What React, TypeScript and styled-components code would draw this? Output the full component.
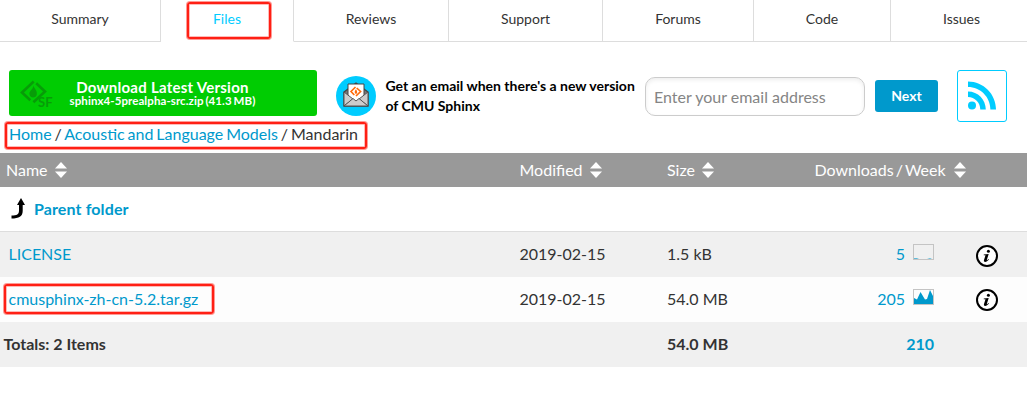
import * as React from 'react';
import styled, { createGlobalStyle } from 'styled-components';

const GlobalStyle = createGlobalStyle`
  * {
    box-sizing: border-box;
  }

  body {
    margin: 0;
    background: #fff;
    color: #333;
    font-family: Lato, 'Open Sans', sans-serif;
    font-size: 16px;
  }
`;

const Page = styled.main`
  width: 1027px;
  height: 415px;
  overflow: hidden;
`;

const TabBar = styled.nav`
  display: flex;
  height: 42px;
`;

const Tab = styled.a<{ $width: number; $active?: boolean; $last?: boolean }>`
  display: flex;
  justify-content: center;
  flex: 0 0 ${(props) => props.$width}px;
  padding: 10px 0 0 ${(props) => (props.$last ? 5 : 0)}px;
  border-right: ${(props) => (props.$last ? 'none' : '1px solid #ddd')};
  border-bottom: 1px solid ${(props) => (props.$active ? 'transparent' : '#ddd')};
  color: ${(props) => (props.$active ? '#0cf' : '#333')};
  font-size: 14px;
  line-height: 18px;
`;

const Marked = styled.span<{ $inset: string }>`
  position: relative;

  &::after {
    content: '';
    position: absolute;
    inset: ${(props) => props.$inset};
    border: 2px solid #ff1f14;
    border-radius: 3px;
    box-shadow: 0 0 0 1px rgba(255, 31, 20, 0.45), inset 0 0 0 1px rgba(255, 31, 20, 0.3);
    pointer-events: none;
  }
`;

const ActionBar = styled.section`
  display: flex;
  align-items: flex-start;
  height: 80px;
  padding: 28px 0 0 9px;
`;

const DownloadButton = styled.a`
  display: flex;
  width: 308px;
  height: 46px;
  padding: 9px 0 0 11px;
  border-radius: 3px;
  background: #00cc02;
  color: #fff;
  font-weight: 700;
`;

const DownloadLabel = styled.span`
  display: flex;
  flex: 1;
  flex-direction: column;
  align-items: center;
  padding-right: 45px;
`;

const DownloadTitle = styled.span`
  font-size: 15px;
  letter-spacing: 0.25px;
  line-height: 16px;
  white-space: nowrap;
`;

const DownloadFile = styled.span`
  font-size: 11.5px;
  letter-spacing: 0.08px;
  line-height: 12px;
  white-space: nowrap;
  word-spacing: -1px;
`;

const MailIcon = styled.svg`
  flex: none;
  margin: 6px 0 0 19px;
`;

const Pitch = styled.p`
  flex: none;
  width: 259.5px;
  margin: 6px 0 0 9.5px;
  color: #000;
  font-size: 14px;
  font-weight: 700;
  line-height: 20px;
  white-space: nowrap;
`;

const EmailInput = styled.input`
  flex: none;
  width: 220px;
  height: 39px;
  margin: 7px 10px 0 0;
  padding: 0 8px;
  border: 1px solid #ccc;
  border-radius: 10px;
  box-shadow: inset 0 2px 4px #eee;
  font-family: inherit;
  font-size: 16px;

  &::placeholder {
    color: #858585;
  }
`;

const NextButton = styled.button`
  flex: none;
  width: 63px;
  height: 32px;
  margin-top: 10px;
  padding: 0 0 2px;
  border: 0;
  border-radius: 3px;
  background: #0099cc;
  color: #fff;
  font-family: inherit;
  font-size: 14px;
  font-weight: 700;
`;

const FeedLink = styled.a`
  display: flex;
  flex: none;
  width: 50px;
  height: 52px;
  margin-left: 19px;
  padding: 10px 0 0 10px;
  border: 1px solid #0cf;
  border-radius: 3px;
`;

const Breadcrumbs = styled.div`
  height: 31px;
  padding: 1px 0 0 9px;
  line-height: 21px;
  white-space: nowrap;
  word-spacing: -1.2px;
`;

const Link = styled.a<{ $bold?: boolean }>`
  color: #0099cc;
  font-weight: ${(props) => (props.$bold ? 700 : 400)};
`;

const Row = styled.div<{ $height: number; $fill?: string; $bold?: boolean }>`
  display: grid;
  grid-template-columns: 519.5px 147.5px 138px 129px 1fr;
  align-items: center;
  height: ${(props) => props.$height}px;
  background: ${(props) => props.$fill || '#fff'};
  font-weight: ${(props) => (props.$bold ? 700 : 400)};
  white-space: nowrap;
`;

const HeaderRow = styled(Row)`
  color: #fff;
`;

const ParentRow = styled(Row)`
  border-bottom: 1px solid #ddd;
  letter-spacing: 0.12px;
`;

const Cell = styled.div<{ $left?: number; $gap?: number; $end?: boolean; $tight?: boolean }>`
  display: flex;
  align-items: center;
  justify-content: ${(props) => (props.$end ? 'flex-end' : 'flex-start')};
  gap: ${(props) => props.$gap || 0}px;
  padding: 0 0 2px ${(props) => props.$left || 0}px;
  word-spacing: ${(props) => (props.$tight ? '-2px' : 'normal')};

  svg {
    flex: none;
  }
`;

const SortIcon = styled.svg`
  margin-top: 1px;
`;

const ChartIcon = styled.svg`
  margin-bottom: 3px;
`;

const InfoIcon = styled.svg<{ $drop: number }>`
  margin-top: ${(props) => props.$drop}px;
`;

const SortArrows = () => (
  <SortIcon width="12" height="16" viewBox="0 0 12 16" fill="#fff">
    <path d="M6 0 12 6.5H0Z" />
    <path d="M0 9.5H12L6 16Z" />
  </SortIcon>
);

const Info: React.FC<{ drop: number }> = (props) => (
  <InfoIcon $drop={props.drop} width="22" height="22" viewBox="0 0 22 22">
    <circle cx="11" cy="11" r="10" fill="#fff" stroke="#000" strokeWidth="2" />
    <circle cx="12.4" cy="6.2" r="1.5" />
    <path d="M7.8 9.6 12.7 8.9 10.8 15C10.7 15.7 11.3 15.2 12.5 13.9L13 14.3C11.7 16.1 10.4 17 9.1 17 8 17 7.7 16.2 8 15.1L9.5 10.3H7.7Z" />
  </InfoIcon>
);

const Sparkline: React.FC<{ path: string; opacity?: number }> = (props) => (
  <ChartIcon width="21" height="16" viewBox="0 0 21 16">
    <rect x="0.5" y="0.5" width="20" height="15" fill="none" stroke="#c4c4c4" />
    <path d={props.path} fill="#0099cc" opacity={props.opacity || 1} />
  </ChartIcon>
);

const MarkIcon = styled.svg`
  flex: none;
`;

const SourceForgeMark = () => (
  <MarkIcon width="33" height="30" viewBox="0 0 33 30">
    <g fill="none" stroke="#079c08" strokeWidth="2.6">
      <path d="M13.7 2.5 2 13.5 10.3 21.3" />
      <path d="M16.2 4.2 25 12.5 13.4 23.3" />
    </g>
    <path d="M13.3 6.5C14.5 10 17.3 11.2 16.8 15.2 16.5 17.5 15 18.5 13.1 18.5 11 18.5 9.4 17.2 9.4 14.6 9.4 11.7 13.4 10.2 13.3 6.5Z" fill="#079c08" />
    <text x="18" y="28" fill="#079c08" fontFamily="Lato, sans-serif" fontSize="13" fontWeight="700">SF</text>
  </MarkIcon>
);

const Newsletter = () => (
  <MailIcon width="40" height="40" viewBox="0 0 40 40">
    <circle cx="20" cy="20" r="20" fill="#0cf" />
    <path d="M8 16 20 7 32 16V30H8Z" fill="#777" stroke="#444" strokeWidth="1.4" />
    <path d="M12 8H28V21L20 26 12 21Z" fill="#fff" stroke="#444" />
    <path d="M8 16 17 23 8 30ZM32 16 23 23 32 30Z" fill="#ccc" stroke="#555" />
    <path d="M8 30 17 22.5 20 25 23 22.5 32 30Z" fill="#ccc" stroke="#555" />
    <g fill="none" stroke="#ff6a0a" strokeWidth="1.6">
      <path d="M19.5 11 15 15.5 18.3 19" />
      <path d="M20.7 12 24.6 15.5 20 20" />
    </g>
    <path d="M20 13.2C21.4 15 21.6 17.7 20 17.7S18.2 15 20 13.2Z" fill="#ff6a0a" />
  </MailIcon>
);

const FeedIcon = () => (
  <svg width="29" height="29" viewBox="0 0 29 29">
    <circle cx="4" cy="24.4" r="4" fill="#0cf" />
    <path d="M0 10.4C10 10.4 17.8 18.5 17.8 28.4H12.3C12.3 21.6 6.8 16 0 16Z" fill="#0cf" />
    <path d="M0 .4C15.5 .4 28 13 28 28.4H22.4C22.4 16 12.3 6 0 6Z" fill="#0cf" />
  </svg>
);

const App: React.FC = () => {
  return (
    <Page>
      <GlobalStyle />
      <TabBar>
        <Tab $width={161}>Summary</Tab>
        <Tab $width={133} $active><Marked $inset="-8px -30px 2px -26px">Files</Marked></Tab>
        <Tab $width={155}>Reviews</Tab>
        <Tab $width={154}>Support</Tab>
        <Tab $width={151}>Forums</Tab>
        <Tab $width={137}>Code</Tab>
        <Tab $width={136} $last>Issues</Tab>
      </TabBar>

      <ActionBar>
        <DownloadButton>
          <SourceForgeMark />
          <DownloadLabel>
            <DownloadTitle>Download Latest Version</DownloadTitle>
            <DownloadFile>sphinx4-5prealpha-src.zip (41.3 MB)</DownloadFile>
          </DownloadLabel>
        </DownloadButton>
        <Newsletter />
        <Pitch>
          Get an email when there's a new version
          <br />
          of CMU Sphinx
        </Pitch>
        <EmailInput placeholder="Enter your email address" />
        <NextButton>Next</NextButton>
        <FeedLink><FeedIcon /></FeedLink>
      </ActionBar>

      <Breadcrumbs>
        <Marked $inset="-2px -9px -6px -4px">
          <Link>Home</Link> / <Link>Acoustic and Language Models</Link> / Mandarin
        </Marked>
      </Breadcrumbs>

      <HeaderRow $height={34} $fill="#999">
        <Cell $left={6} $gap={7}>Name <SortArrows /></Cell>
        <Cell $gap={7}>Modified <SortArrows /></Cell>
        <Cell $gap={7}>Size <SortArrows /></Cell>
        <Cell $left={9.5} $gap={8} $tight>Downloads / Week <SortArrows /></Cell>
      </HeaderRow>
      <ParentRow $height={45}>
        <Cell $left={11} $gap={9}>
          <svg width="14" height="21" viewBox="0 0 14 21">
            <path d="M10 0 14 7H11.7V13C11.7 18.3 8 20.5 .5 20.5V17.5C6 17.5 8 16.3 8 12.5V7H6Z" />
          </svg>
          <Link $bold>Parent folder</Link>
        </Cell>
      </ParentRow>
      <Row $height={45} $fill="#f0f0f0">
        <Cell $left={8.5}><Link>LICENSE</Link></Cell>
        <Cell>2019-02-15</Cell>
        <Cell>1.5 kB</Cell>
        <Cell $gap={8} $end>
          <Link>5</Link>
          <Sparkline path="M1 14H4L6 15H1ZM14 15 17 14 19 15Z" opacity={0.6} />
        </Cell>
        <Cell $left={42}><Info drop={5} /></Cell>
      </Row>
      <Row $height={45} $fill="#fdfdfd">
        <Cell $left={8.5}>
          <Marked $inset="-5px -16px -6px -4.5px"><Link>cmusphinx-zh-cn-5.2.tar.gz</Link></Marked>
        </Cell>
        <Cell>2019-02-15</Cell>
        <Cell>54.0 MB</Cell>
        <Cell $gap={8} $end>
          <Link>205</Link>
          <Sparkline path="M1 9 4 10.5 7.5 3 12 10.5 14 10 17 1 20 7V15H1Z" />
        </Cell>
        <Cell $left={42}><Info drop={3} /></Cell>
      </Row>
      <Row $height={45} $fill="#f0f0f0" $bold>
        <Cell $left={3.5}>Totals: 2 Items</Cell>
        <Cell />
        <Cell>54.0 MB</Cell>
        <Cell $end><Link $bold>210</Link></Cell>
      </Row>
    </Page>
  );
};

export default App;
